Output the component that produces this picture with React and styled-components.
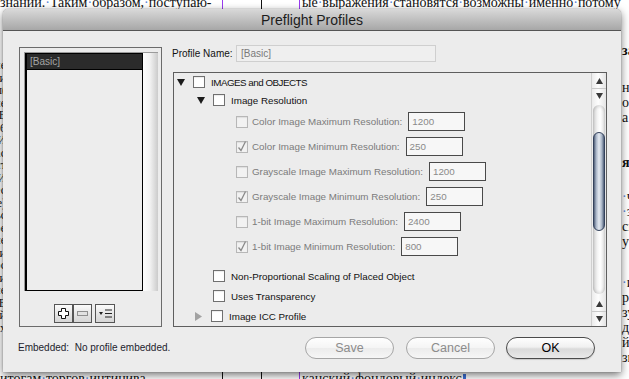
import React from 'react'
import styled, { createGlobalStyle } from 'styled-components'

const ui = `'Liberation Sans', Arial, sans-serif`
const serif = `'Liberation Serif', 'Times New Roman', serif`

const GlobalStyle = createGlobalStyle`
  html, body {
    margin: 0;
    padding: 0;
    background: #fff;
  }
  body {
    width: 629px;
    height: 379px;
    overflow: hidden;
  }
`

/* ---------- document behind the dialog ---------- */

const Page = styled.div`
  position: relative;
  width: 629px;
  height: 379px;
  overflow: hidden;
  background: #fff;
  display: flex;
  flex-direction: column;
  font-family: ${serif};
  color: #111;
`

const DocStrip = styled.div`
  display: flex;
  flex: none;
  height: ${p => p.$h}px;
  overflow: hidden;
  font-size: 14px;
  line-height: 15px;
`

const DocCell = styled.div`
  flex: ${p => (p.$w ? 'none' : '1')};
  width: ${p => (p.$w ? `${p.$w}px` : 'auto')};
  margin-top: ${p => p.$mt || 0}px;
  padding-left: ${p => p.$pl || 0}px;
  white-space: nowrap;
  overflow: hidden;
  text-align: ${p => (p.$justify ? 'justify' : 'left')};
  text-align-last: ${p => (p.$justify ? 'justify' : 'auto')};
`

const Rule = styled.div`
  flex: none;
  width: 1px;
  background: ${p => p.$c};
`

const Dot = styled.span`
  color: #5a86d8;
`

const Cursor = styled.span`
  display: inline-block;
  width: 3px;
  height: 10px;
  margin-left: 1px;
  background: #3d6fd6;
  vertical-align: -1px;
`

const MiddleRow = styled.div`
  flex: 1;
  display: flex;
`

const LeftFrags = styled.div`
  width: 3px;
  flex: none;
  overflow: hidden;
  padding-top: 50px;
  font-size: 12px;
  line-height: 12.5px;
`

const LeftFrag = styled.div`
  display: flex;
  justify-content: flex-end;
  white-space: nowrap;
  span {
    margin-right: -3px;
  }
`

const DocSpacer = styled.div`
  flex: 1;
`

const RightFrags = styled.div`
  width: 8px;
  flex: none;
  overflow: hidden;
  font-size: 14px;
  line-height: 15px;
`

const RightFrag = styled.div`
  white-space: nowrap;
  margin-top: ${p => p.$mt || 0}px;
  padding-left: 1px;
  font-weight: ${p => (p.$b ? 700 : 400)};
`

const Dotted = ({ text }) =>
  text.split(' ').map((w, i) => (
    <React.Fragment key={i}>
      {i > 0 && <Dot>·</Dot>}
      {w}
    </React.Fragment>
  ))

const rightFrags = [
  { t: 'за', mt: 34, b: true },
  { t: 'ну', mt: 22 },
  { t: 'о' },
  { t: 'а' },
  { t: 'я', mt: 30, b: true },
  { t: 'ч', mt: 19, dot: true },
  { t: 'з', dot: true },
  { t: 'см' },
  { t: 'ут' },
  { t: 'и', mt: 26, dot: true },
  { t: 'ры' },
  { t: 'зу' },
  { t: 'да' },
  { t: 'йо' },
  { t: 'зв' },
]

const leftFrags = ['ме', 'ии', 'ы(', 'ие', 'ИЕ', 'ь6', 'ИИ', 'ас', 'ит', 'ИИ', 'ес', 'е)', 'ьс', 'ое', 'ие', 'ти', 'ос', 'ии', 'не', 'ИЕ', 'ой', 'ых']

/* ---------- dialog window ---------- */

const Window = styled.div`
  position: absolute;
  left: 3px;
  top: 9px;
  width: 618px;
  height: 363px;
  display: flex;
  flex-direction: column;
  background: #ececec;
  border-radius: 5px 5px 0 0;
  box-shadow: 0 3px 9px rgba(0, 0, 0, 0.55), 0 0 1px rgba(0, 0, 0, 0.6);
  font-family: ${ui};
  color: #111;
`

const TitleBar = styled.div`
  flex: none;
  height: 21px;
  display: flex;
  align-items: center;
  justify-content: center;
  background: linear-gradient(#d9d9d9, #a7a7a7);
  border-bottom: 1px solid #555;
  border-radius: 5px 5px 0 0;
  font-size: 14px;
  color: #1c1c1c;
`

const Main = styled.div`
  display: flex;
  gap: 10px;
  padding: 14px 14px 0 16px;
`

const ProfilesPanel = styled.div`
  box-sizing: border-box;
  width: 143px;
  height: 280px;
  margin-top: 2px;
  padding: 4px 3px 0 4px;
  border: 1px solid #6b6b6b;
  display: flex;
  flex-direction: column;
`

const ListFrame = styled.div`
  height: 238px;
  display: flex;
  border-top: 1px solid #9b9b9b;
  border-left: 1px solid #9b9b9b;
`

const List = styled.div`
  flex: 1;
  border: 1px solid #000;
  border-left-width: 2px;
  background: #ededed;
`

const ListItem = styled.div`
  height: 15px;
  padding-left: 3px;
  display: flex;
  align-items: center;
  background: ${p => (p.$selected ? '#2b2b2b' : 'transparent')};
  border-bottom: 1px solid #000;
  font-size: 10px;
  color: ${p => (p.$selected ? '#a4a4a4' : '#111')};
`

const ListTrack = styled.div`
  width: 15px;
  flex: none;
  background: linear-gradient(to right, #fdfdfd, #f3f3f3 45%, #cbcbcb);
`

const ToolRow = styled.div`
  display: flex;
  margin: 13px 0 0 30px;
`

const ToolButton = styled.div`
  box-sizing: border-box;
  width: ${p => p.$w || 19}px;
  height: 19px;
  margin-left: ${p => p.$gap || 0}px;
  border: 1px solid #555;
  background: linear-gradient(#fbfbfb, #e4e4e4 55%, #d6d6d6);
  display: flex;
  align-items: center;
  justify-content: center;
`

const RightColumn = styled.div`
  flex: 1;
  display: flex;
  flex-direction: column;
`

const FieldRow = styled.div`
  height: 17px;
  display: flex;
  align-items: center;
`

const FieldLabel = styled.span`
  width: 64px;
  font-size: 10px;
  color: #111;
`

const NameInput = styled.div`
  box-sizing: border-box;
  width: 200px;
  height: 17px;
  padding-left: 4px;
  display: flex;
  align-items: center;
  border: 1px solid #cfcfcf;
  background: #efefef;
  font-size: 10px;
  color: #7a7a7a;
`

const TreeBox = styled.div`
  box-sizing: border-box;
  height: 255px;
  margin: 10px 0 0 1px;
  border: 1px solid #5e5e5e;
  display: flex;
`

const Tree = styled.div`
  flex: 1;
  display: flex;
  flex-direction: column;
`

const TreeRow = styled.div`
  flex: none;
  height: ${p => p.$h}px;
  margin-top: ${p => p.$mt || 0}px;
  padding-left: ${p => p.$indent}px;
  display: flex;
  align-items: center;
  font-size: 9.8px;
  color: ${p => (p.$muted ? '#7b7b7b' : '#111')};
  white-space: nowrap;
`

const Disclosure = styled.span`
  width: 16px;
  flex: none;
  display: flex;
  align-items: center;
`

const Check = styled.span`
  box-sizing: border-box;
  width: 12px;
  height: 12px;
  flex: none;
  display: flex;
  align-items: center;
  justify-content: center;
  border: 1px solid ${p => (p.$disabled ? '#b7b7b7' : '#707070')};
  background: ${p => (p.$disabled ? '#f2f2f2' : '#fff')};
  box-shadow: inset 0 1px 1px rgba(0, 0, 0, 0.08);
`

const Label = styled.span`
  margin-left: ${p => p.$gap}px;
  letter-spacing: ${p => (p.$tight ? '-0.5px' : 'normal')};
`

const ValueBox = styled.span`
  box-sizing: border-box;
  width: 57px;
  height: 19px;
  margin-left: 6px;
  padding-left: 3px;
  display: flex;
  align-items: center;
  border: 1px solid #4a4a4a;
  background: #f7f7f7;
  color: #8a8a8a;
`

const VScroll = styled.div`
  width: 14px;
  flex: none;
  display: flex;
  flex-direction: column;
  border-left: 1px solid #cfcfcf;
  background: linear-gradient(to right, #ececec, #fdfdfd 45%, #e4e4e4);
`

const ArrowCell = styled.div`
  height: 15px;
  flex: none;
  display: flex;
  align-items: center;
  justify-content: center;
  border-top: ${p => (p.$line ? '1px solid #c9c9c9' : 'none')};
  box-sizing: border-box;
`

const Track = styled.div`
  flex: 1;
  margin: 2px 1px;
  border-radius: 7px;
  background: linear-gradient(to right, #d2d2d2, #f6f6f6 40%, #fff 60%, #e1e1e1);
  box-shadow: inset 0 2px 3px rgba(0, 0, 0, 0.12), inset 0 -2px 3px rgba(0, 0, 0, 0.1);
  display: flex;
  flex-direction: column;
  align-items: center;
`

const Thumb = styled.div`
  box-sizing: border-box;
  width: 12px;
  height: 99px;
  margin-top: 27px;
  border-radius: 7px;
  border: 1px solid #34425c;
  background: linear-gradient(to right, #52607a, #aab6c8 22%, #e6ebf2 50%, #a9b5c6 78%, #4f5e78);
`

const Footer = styled.div`
  flex: 1;
  display: flex;
  align-items: center;
  padding: 0 26px 4px 15px;
`

const Status = styled.span`
  font-size: 10px;
  color: #1d1d2e;
  white-space: pre;
`

const Buttons = styled.div`
  margin-left: auto;
  display: flex;
  gap: 11px;
`

const PillButton = styled.button`
  box-sizing: border-box;
  width: 89px;
  height: 22px;
  padding: 0;
  margin-left: ${p => p.$shift || 0}px;
  border-radius: 11px;
  border: 1px solid ${p => (p.$primary ? '#4b4b4b' : '#a6a6a6')};
  background: ${p =>
    p.$primary
      ? 'linear-gradient(#fefefe, #f1f1f1 45%, #dadada 55%, #e9e9e9)'
      : 'linear-gradient(#fefefe, #f5f5f5 48%, #ececec 52%, #f6f6f6)'};
  box-shadow: ${p => (p.$primary ? '0 1px 1px rgba(0,0,0,0.15)' : 'none')};
  font-family: ${ui};
  font-size: 12.5px;
  color: ${p => (p.$primary ? '#000' : '#8c8c8c')};
`

/* ---------- small drawings ---------- */

const TriDown = ({ color = '#1b1b1b' }) => (
  <svg width="8" height="7" viewBox="0 0 8 7">
    <polygon points="0,0 8,0 4,7" fill={color} />
  </svg>
)

const TriRight = () => (
  <svg width="7" height="9" viewBox="0 0 7 9">
    <polygon points="0,0 7,4.5 0,9" fill="#a2a2a2" />
  </svg>
)

const Tick = () => (
  <svg width="10" height="11" viewBox="0 0 10 11">
    <path d="M1.5 6.5 L4 9.5 L8.5 0.5" fill="none" stroke="#8a8a8a" strokeWidth="1.3" />
  </svg>
)

const ArrowUp = () => (
  <svg width="7" height="6" viewBox="0 0 7 6">
    <polygon points="3.5,0 7,6 0,6" fill="#3a3a3a" />
  </svg>
)

const ArrowDown = () => (
  <svg width="7" height="6" viewBox="0 0 7 6">
    <polygon points="0,0 7,0 3.5,6" fill="#3a3a3a" />
  </svg>
)

const PlusIcon = () => (
  <svg width="11" height="11" viewBox="0 0 11 11">
    <path d="M3.5 0.5h4v3h3v4h-3v3h-4v-3h-3v-4h3z" fill="#fff" stroke="#111" strokeWidth="1" />
  </svg>
)

const MinusIcon = () => (
  <svg width="11" height="5" viewBox="0 0 11 5">
    <rect x="0.5" y="0.5" width="10" height="4" fill="#e2e2e2" stroke="#8f8f8f" />
  </svg>
)

const MenuIcon = () => (
  <svg width="13" height="9" viewBox="0 0 13 9">
    <polygon points="0,3 4,3 2,6" fill="#222" />
    <rect x="6" y="0.5" width="7" height="1" fill="#222" />
    <rect x="6" y="4" width="7" height="1" fill="#222" />
    <rect x="6" y="7.5" width="7" height="1" fill="#222" />
  </svg>
)

const resolutionRows = [
  { label: 'Color Image Maximum Resolution:', value: '1200' },
  { label: 'Color Image Minimum Resolution:', value: '250', checked: true },
  { label: 'Grayscale Image Maximum Resolution:', value: '1200' },
  { label: 'Grayscale Image Minimum Resolution:', value: '250', checked: true },
  { label: '1-bit Image Maximum Resolution:', value: '2400' },
  { label: '1-bit Image Minimum Resolution:', value: '800', checked: true },
]

export default function App() {
  return (
    <>
      <GlobalStyle />
      <Page>
        <DocStrip $h={9}>
          <DocCell $w={222} $mt={-5} $justify>
            <Dotted text="знании. Таким образом, поступаю-" />
          </DocCell>
          <Rule $c="#9a3cf0" />
          <DocCell $w={38} />
          <Rule $c="#111" />
          <DocCell $w={37} />
          <Rule $c="#9a3cf0" />
          <DocCell $mt={-5} $pl={2}>
            <Dotted text="ые выражения становятся возможны именно потому" />
          </DocCell>
        </DocStrip>

        <MiddleRow>
          <LeftFrags>
            {leftFrags.map((t, i) => (
              <LeftFrag key={i}>
                <span>{t}</span>
              </LeftFrag>
            ))}
          </LeftFrags>
          <DocSpacer />
          <RightFrags>
            {rightFrags.map((f, i) => (
              <RightFrag key={i} $mt={f.mt} $b={f.b}>
                {f.dot && <Dot>·</Dot>}
                {f.t}
              </RightFrag>
            ))}
          </RightFrags>
        </MiddleRow>

        <DocStrip $h={7}>
          <DocCell $w={222} $mt={-1} $justify>
            <Dotted text="итогам торгов интинива" />
          </DocCell>
          <Rule $c="#111" />
          <DocCell $w={38} />
          <Rule $c="#111" />
          <DocCell $w={37} />
          <Rule $c="#9a3cf0" />
          <DocCell $mt={-1} $pl={2}>
            <Dotted text="канский фондовый индекс" />
            <Cursor />
          </DocCell>
        </DocStrip>

        <Window>
          <TitleBar>Preflight Profiles</TitleBar>
          <Main>
            <ProfilesPanel>
              <ListFrame>
                <List>
                  <ListItem $selected>[Basic]</ListItem>
                </List>
                <ListTrack />
              </ListFrame>
              <ToolRow>
                <ToolButton>
                  <PlusIcon />
                </ToolButton>
                <ToolButton>
                  <MinusIcon />
                </ToolButton>
                <ToolButton $w={20} $gap={3}>
                  <MenuIcon />
                </ToolButton>
              </ToolRow>
            </ProfilesPanel>

            <RightColumn>
              <FieldRow>
                <FieldLabel>Profile Name:</FieldLabel>
                <NameInput>[Basic]</NameInput>
              </FieldRow>
              <TreeBox>
                <Tree>
                  <TreeRow $h={18} $indent={3}>
                    <Disclosure>
                      <TriDown />
                    </Disclosure>
                    <Check />
                    <Label $gap={6} $tight>IMAGES and OBJECTS</Label>
                  </TreeRow>
                  <TreeRow $h={18} $indent={23}>
                    <Disclosure>
                      <TriDown />
                    </Disclosure>
                    <Check />
                    <Label $gap={6}>Image Resolution</Label>
                  </TreeRow>
                  {resolutionRows.map(r => (
                    <TreeRow key={r.label} $h={25} $indent={62} $muted>
                      <Check $disabled>{r.checked && <Tick />}</Check>
                      <Label $gap={4}>{r.label}</Label>
                      <ValueBox>{r.value}</ValueBox>
                    </TreeRow>
                  ))}
                  <TreeRow $h={20} $mt={7} $indent={39}>
                    <Check />
                    <Label $gap={6}>Non-Proportional Scaling of Placed Object</Label>
                  </TreeRow>
                  <TreeRow $h={20} $indent={39}>
                    <Check />
                    <Label $gap={6}>Uses Transparency</Label>
                  </TreeRow>
                  <TreeRow $h={20} $indent={21}>
                    <Disclosure>
                      <TriRight />
                    </Disclosure>
                    <Check />
                    <Label $gap={6}>Image ICC Profile</Label>
                  </TreeRow>
                </Tree>
                <VScroll>
                  <ArrowCell>
                    <ArrowUp />
                  </ArrowCell>
                  <ArrowCell $line>
                    <ArrowDown />
                  </ArrowCell>
                  <Track>
                    <Thumb />
                  </Track>
                  <ArrowCell>
                    <ArrowUp />
                  </ArrowCell>
                  <ArrowCell $line>
                    <ArrowDown />
                  </ArrowCell>
                </VScroll>
              </TreeBox>
            </RightColumn>
          </Main>
          <Footer>
            <Status>Embedded:  No profile embedded.</Status>
            <Buttons>
              <PillButton disabled>Save</PillButton>
              <PillButton disabled $shift={1}>Cancel</PillButton>
              <PillButton $primary>OK</PillButton>
            </Buttons>
          </Footer>
        </Window>
      </Page>
    </>
  )
}
